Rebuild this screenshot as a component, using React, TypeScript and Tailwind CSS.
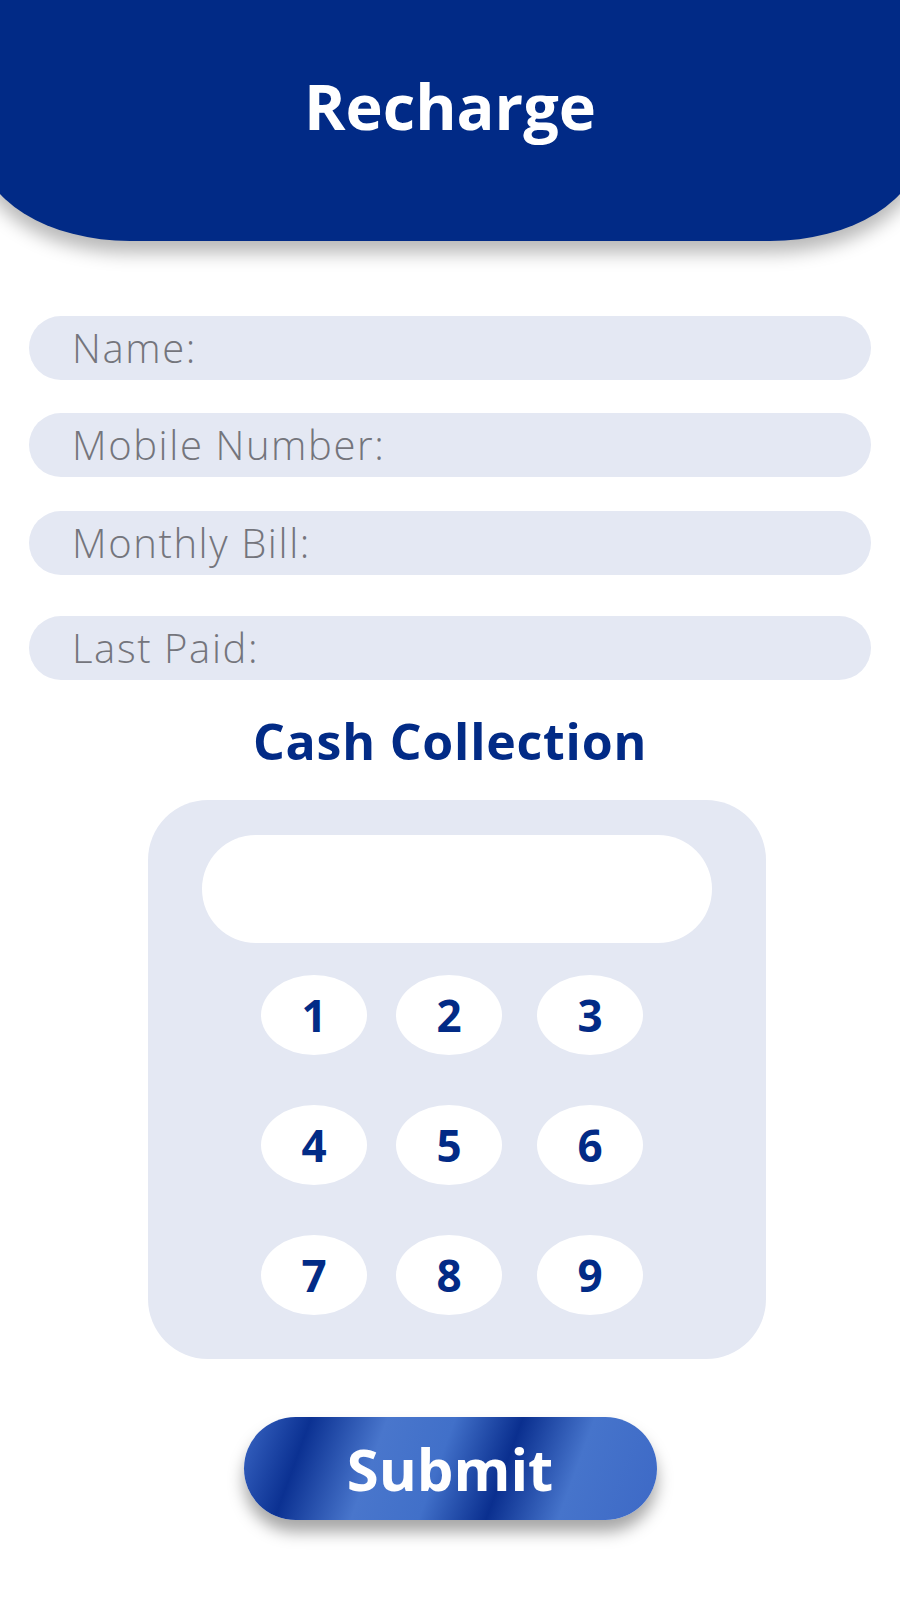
import React from 'react';

const fields = ['Name:', 'Mobile Number:', 'Monthly Bill:', 'Last Paid:'];
const fieldGaps = ['mt-0', 'mt-[33px]', 'mt-[34px]', 'mt-[41px]'];
const keys = [
  ['1', '2', '3'],
  ['4', '5', '6'],
  ['7', '8', '9'],
];

export default function App() {
  return (
    <div className="min-h-[1600px] w-[900px] overflow-hidden bg-white font-['Open_Sans',sans-serif]">
      {/* Header - a bit wider than the screen so the curve enters at an angle */}
      <div className="relative z-10 -ml-[20px] h-[241px] w-[940px] bg-[#012a86] pt-[74px] rounded-bl-[150px_94px] rounded-br-[150px_94px] shadow-[0_12px_18px_rgba(0,0,0,0.28)]">
        <h1 className="text-center text-[63px] font-bold leading-none text-white">Recharge</h1>
      </div>

      {/* Form fields */}
      <div className="mt-[75px] px-[29px]">
        {fields.map((label, i) => (
          <div
            key={label}
            className={`${fieldGaps[i]} flex h-[64px] items-center rounded-full bg-[#e4e8f3] pl-[43px]`}
          >
            <span className="text-[40px] font-light leading-none tracking-[1.6px] text-[#74757c]">{label}</span>
          </div>
        ))}
      </div>

      <h2 className="mt-[36px] text-center text-[50px] font-bold leading-none tracking-[0.8px] text-[#022b86]">Cash Collection</h2>

      {/* Keypad */}
      <div className="ml-[148px] mt-[34px] w-[618px] rounded-[60px] bg-[#e4e8f3] px-[54px] pt-[35px] pb-[44px]">
        <div className="h-[108px] rounded-full bg-white" />
        <div className="ml-[59px] mt-[32px] flex flex-col gap-[50px]">
          {keys.map((row, r) => (
            <div key={r} className="flex gap-[29px]">
              {row.map((k, j) => (
                <button
                  key={k}
                  className={`${j === 2 ? 'ml-[6px]' : ''} flex h-[80px] w-[106px] items-center justify-center rounded-[50%] bg-white text-[44px] font-bold leading-none text-[#022b86]`}
                >
                  {k}
                </button>
              ))}
            </div>
          ))}
        </div>
      </div>

      {/* Submit */}
      <button className="mx-auto mt-[58px] flex h-[103px] w-[413px] items-center justify-center rounded-full bg-[linear-gradient(110deg,#3a66c4_0%,#0b3192_15%,#4976cc_32%,#4170c9_47%,#0a2f8f_62%,#4674cb_78%,#3d69c6_100%)] text-[58px] font-bold leading-none text-white shadow-[0_12px_16px_rgba(0,0,0,0.35)]">
        Submit
      </button>
    </div>
  );
}
